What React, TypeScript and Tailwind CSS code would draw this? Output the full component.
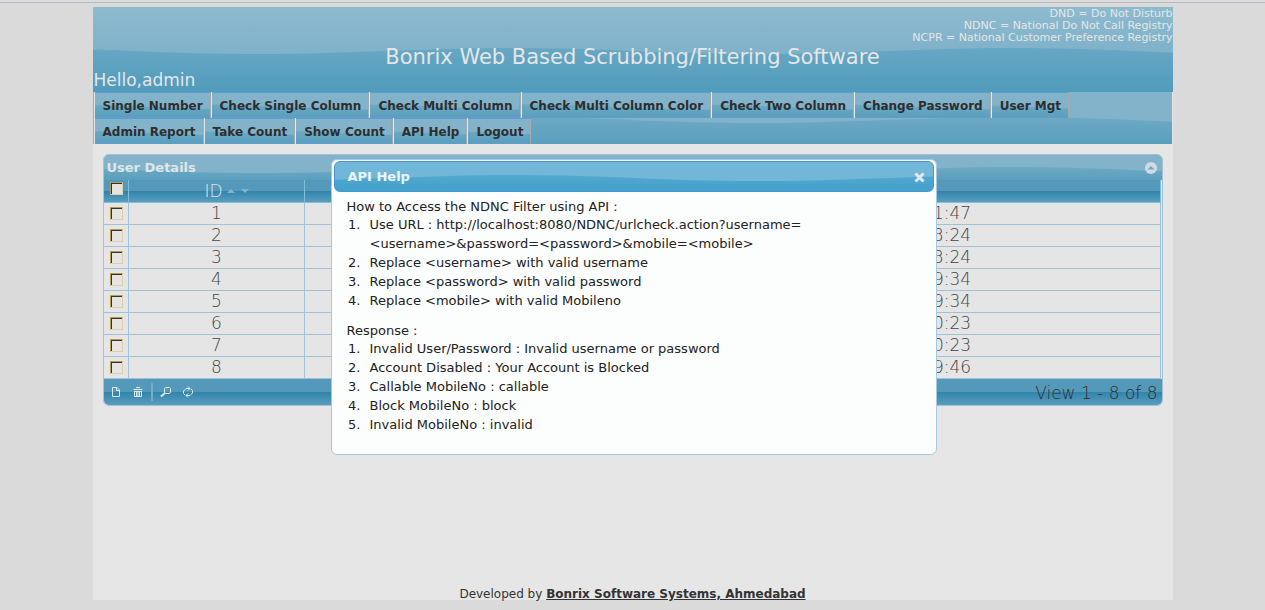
import { useId, useState } from 'react';

const menuItems = [
  'Single Number',
  'Check Single Column',
  'Check Multi Column',
  'Check Multi Column Color',
  'Check Two Column',
  'Change Password',
  'User Mgt',
  'Admin Report',
  'Take Count',
  'Show Count',
  'API Help',
  'Logout',
];

const users = [
  { id: 1, time: '1:47' },
  { id: 2, time: '3:24' },
  { id: 3, time: '3:24' },
  { id: 4, time: '9:34' },
  { id: 5, time: '9:34' },
  { id: 6, time: '0:23' },
  { id: 7, time: '0:23' },
  { id: 8, time: '9:46' },
];

const checkboxClass =
  'block size-[13px] appearance-none border border-t-[#b39a55] border-l-[#b39a55] border-r-[#dccfb0] border-b-[#dccfb0] bg-[#e6e4e0] shadow-[inset_1px_1px_0_#333] checked:bg-[#539cbd]';

// Light wave that repeats over the upper half of a bar, counted from its middle
function Gloss({ y, color }: { y: number; color: string }) {
  const id = useId();
  return (
    <svg className="absolute inset-0 -z-10 h-full w-full" aria-hidden="true">
      <defs>
        <pattern id={id} x="50%" width="500" height="100" patternUnits="userSpaceOnUse">
          <path
            transform={`translate(0 ${y})`}
            d="M0-60V3C40 5 80 6 127 6C220 6 290 0 377 0C420 0 460 1 500 3V-60Z"
            fill={color}
          />
        </pattern>
      </defs>
      <rect width="100%" height="100%" fill={`url(#${id})`} />
    </svg>
  );
}

function Header() {
  return (
    <header className="relative isolate flex h-[85px] flex-col bg-linear-to-b from-[#79b2cb] to-[#519bbc] pt-px text-[#e6e6e6]">
      <Gloss y={41} color="rgba(190,205,215,0.3)" />
      <div className="text-right text-[11px] leading-3">
        <p>DND = Do Not Disturb</p>
        <p>NDNC = National Do Not Call Registry</p>
        <p>NCPR = National Customer Preference Registry</p>
      </div>
      <h1 className="text-center text-[21px] leading-[26px]">Bonrix Web Based Scrubbing/Filtering Software</h1>
      <p className="pl-px text-[17px] leading-5">Hello,admin</p>
    </header>
  );
}

function Menu({ onHelp }: { onHelp: () => void }) {
  return (
    <nav className="relative isolate mr-px border-l border-[#a9a9a9] bg-linear-to-b from-[#7db2ca] to-[#5a9fbe]">
      <Gloss y={25} color="#82b3ca" />
      <ul className="flex flex-wrap">
        {menuItems.map((item) => (
          <li key={item} className="border-l border-[#e6e6e6]">
            <button
              onClick={item === 'API Help' ? onHelp : undefined}
              className="relative isolate h-[26px] border-y border-r border-y-[#5f9dca] border-r-[#a9a9a9] bg-linear-to-b from-[#7db2ca] to-[#5a9fbe] pt-[2px] pr-[7px] pl-[8px] text-[12px] font-bold text-[#2e2e2e]"
            >
              <Gloss y={11} color="#82b3ca" />
              {item}
            </button>
          </li>
        ))}
      </ul>
    </nav>
  );
}

function Toolbar() {
  return (
    <div className="flex items-center gap-[10px] text-[#dceaf0]">
      <button aria-label="Add">
        <svg width="12" height="12" viewBox="0 0 12 12" fill="none" stroke="currentColor">
          <path d="M2.5 1.5H7L9.5 4V10.5H2.5ZM6.5 1.5V4.5H9.5" />
        </svg>
      </button>
      <button aria-label="Delete">
        <svg width="12" height="12" viewBox="0 0 12 12" fill="none" stroke="currentColor">
          <path d="M4 1.5H8M1.5 3.5H10.5M2.5 5V10.5H9.5V5M2 5.5H10M4.5 5V10M6 5V10M7.5 5V10" />
        </svg>
      </button>
      <span className="-mx-[3px] h-[18px] w-[2px] bg-[#78acc5]" />
      <button aria-label="Find">
        <svg width="12" height="12" viewBox="0 0 12 12" fill="none" stroke="currentColor">
          <path d="M5.5 1.5H9.5L10.5 2.5V6L9.5 7.5H5.5L4.5 6V2.5Z" />
          <path d="M5 7L1 10.5" strokeWidth="2" />
        </svg>
      </button>
      <button aria-label="Refresh">
        <svg width="12" height="12" viewBox="0 0 12 12" fill="none" stroke="currentColor">
          <path d="M8 2.5H4L1.5 5V7.5L3 9M4 9.5H8L10.5 7V4.5L9 3" />
          <path d="M6 .5L8 2.5L6 4.5M6 7.5L4 9.5L6 11.5" />
        </svg>
      </button>
    </div>
  );
}

function UserGrid() {
  return (
    <section className="m-[10px] overflow-hidden rounded-md border border-[#a3c1d4] bg-[#e4e5e4]">
      <div className="relative isolate flex h-[25px] items-center justify-between bg-linear-to-b from-[#7db2ca] to-[#5a9fbe] pr-[5px] pl-[3px]">
        <Gloss y={12} color="#82b3ca" />
        <h2 className="text-[13px] font-bold text-[#dde6ea]">User Details</h2>
        <button aria-label="Collapse">
          <svg width="12" height="12" viewBox="0 0 12 12">
            <circle cx="6" cy="6" r="6" fill="#d2dae4" />
            <path d="M2.5 7.5L6 4L9.5 7.5Z" fill="#6ba8c4" />
          </svg>
        </button>
      </div>
      <div className="pr-px">
        <table className="w-full table-fixed border-collapse text-[17px] leading-5 text-[#444]">
          <colgroup>
            <col className="w-[25px]" />
            <col className="w-[176px]" />
            <col />
            <col className="w-[228px]" />
          </colgroup>
          <thead>
            <tr className="h-[22px] bg-linear-to-b from-[#5499b9] from-50% via-[#2f84ac] via-50% to-[#5a9dbc] text-[#dde8ee]">
              <th className="border-r border-b border-[#7fc0da] p-0 pt-[2px] pl-[6px] align-top">
                <input type="checkbox" aria-label="Select all users" className={checkboxClass} />
              </th>
              <th className="border-r border-b border-[#7fc0da] p-0 font-extralight">
                <span className="flex items-center justify-center gap-1 pl-5">
                  ID
                  <svg width="22" height="6" viewBox="0 0 22 6" fill="#82b3ca">
                    <path d="M0 5L4 1L8 5ZM14 1H22L18 5Z" />
                  </svg>
                </span>
              </th>
              <th className="border-b border-[#7fc0da]" />
              <th className="border-r border-b border-[#7fc0da]" />
            </tr>
          </thead>
          <tbody>
            {users.map((user) => (
              <tr key={user.id} className="h-[22px]">
                <td className="border-r border-b border-[#a3c1d4] p-0 pl-[6px]">
                  <input type="checkbox" aria-label={`Select user ${user.id}`} className={checkboxClass} />
                </td>
                <td className="border-r border-b border-[#a3c1d4] p-0 text-center font-extralight">{user.id}</td>
                <td className="border-b border-[#a3c1d4] p-0" />
                <td className="border-r border-b border-[#a3c1d4] p-0 pl-px font-extralight">{user.time}</td>
              </tr>
            ))}
          </tbody>
        </table>
      </div>
      <div className="flex h-[26px] items-center justify-between bg-linear-to-b from-[#5499b9] from-50% via-[#2f84ac] via-50% to-[#5a9dbc] pr-1 pl-[6px]">
        <Toolbar />
        <p className="pt-1 text-[17px] font-extralight text-[#2e2e2e]">View 1 - 8 of 8</p>
      </div>
    </section>
  );
}

function HelpDialog({ onClose }: { onClose: () => void }) {
  return (
    <div
      role="dialog"
      aria-labelledby="help-title"
      className="absolute top-[157px] left-1/2 ml-px w-[606px] -translate-x-1/2 rounded-md border border-[#a6c9e2] bg-[#fcfdfd] px-[2px] pt-px pb-[20px] text-[#222]"
    >
      <div className="relative isolate flex h-[31px] items-center justify-between overflow-hidden rounded-md border border-[#4297d7] bg-linear-to-b from-[#5fafd5] to-[#42a0cb] pt-px pr-[8px] pl-[13px]">
        <Gloss y={13} color="#72b7d7" />
        <h2 id="help-title" className="text-[13px] font-bold text-[#eaf5f7]">API Help</h2>
        <button onClick={onClose} aria-label="Close">
          <svg width="11" height="11" viewBox="0 0 11 11" stroke="#dcebf5" strokeWidth="3">
            <path d="M1.5 1.5L9.5 9.5M9.5 1.5L1.5 9.5" />
          </svg>
        </button>
      </div>
      <div className="px-[13px] pt-[6px] text-[13px] leading-[19px]">
        <p className="leading-[17px]">How to Access the NDNC Filter using API :</p>
        <ol className="list-decimal pl-[18px]">
          <li className="pl-[5px]">
            Use URL : http://localhost:8080/NDNC/urlcheck.action?username=
            <br />
            &lt;username&gt;&amp;password=&lt;password&gt;&amp;mobile=&lt;mobile&gt;
          </li>
          <li className="pl-[5px]">Replace &lt;username&gt; with valid username</li>
          <li className="pl-[5px]">Replace &lt;password&gt; with valid password</li>
          <li className="pl-[5px]">Replace &lt;mobile&gt; with valid Mobileno</li>
        </ol>
        <p className="pt-[12px] leading-[17px]">Response :</p>
        <ol className="list-decimal pl-[18px]">
          <li className="pl-[5px]">Invalid User/Password : Invalid username or password</li>
          <li className="pl-[5px]">Account Disabled : Your Account is Blocked</li>
          <li className="pl-[5px]">Callable MobileNo : callable</li>
          <li className="pl-[5px]">Block MobileNo : block</li>
          <li className="pl-[5px]">Invalid MobileNo : invalid</li>
        </ol>
      </div>
    </div>
  );
}

export default function App() {
  const [helpOpen, setHelpOpen] = useState(true);

  return (
    <div className="relative min-h-screen border-t-2 border-[#dcdcdc] bg-[#dadada] font-['DejaVu_Sans',Verdana,sans-serif]">
      <div className="border-t border-[#b8b8c4] pt-1 pb-[10px]">
        <div className="mx-auto flex min-h-[calc(100vh-17px)] max-w-[1080px] flex-col bg-[#e6e6e6]">
          <Header />
          <Menu onHelp={() => setHelpOpen(true)} />
          <UserGrid />
          <footer className="mt-auto text-center text-[12px] leading-3 text-[#333]">
            Developed by{' '}
            <a href="#" className="font-bold underline">
              Bonrix Software Systems, Ahmedabad
            </a>
          </footer>
        </div>
      </div>
      {helpOpen && <HelpDialog onClose={() => setHelpOpen(false)} />}
    </div>
  );
}
